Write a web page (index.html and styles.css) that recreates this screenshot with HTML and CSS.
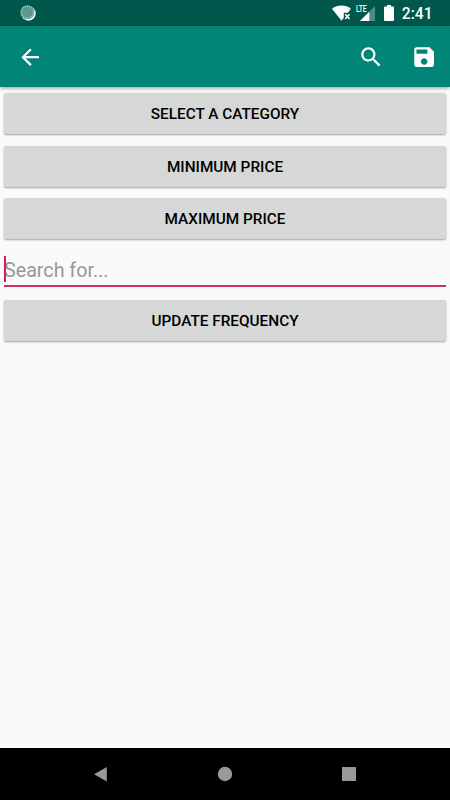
FILE: index.html
```html
<!DOCTYPE html>
<html lang="en">
<head>
<meta charset="utf-8">
<title>Search</title>
<link rel="stylesheet" href="styles.css">
</head>
<body>
<div class="screen">
  <div class="status">
    <svg class="sync" viewBox="0 0 16 16"><circle cx="8.4" cy="8.4" r="7.3" fill="#fff"/><circle cx="7.4" cy="7.3" r="7" fill="#5b978b"/><circle cx="7.4" cy="7.3" r="6" fill="none" stroke="#a5c9c2" stroke-width="1.4" stroke-dasharray="1 1.1"/></svg>
    <div class="tray">
      <svg class="wifi" viewBox="0 0 20 16"><path d="M0 3.8C5.5-.6 13.500-.6 19 3.800L15.800 7.800H11.800V12.800L9.500 15.700Z" fill="#fff"/><path d="M13.200 9.200l4.300 4.700M17.500 9.200l-4.300 4.700" stroke="#fff" stroke-width="1.500"/></svg>
      <div class="cell">
        <svg class="bars" viewBox="0 0 15 15"><path d="M15 0V15H0Z" fill="#4d8c80"/><path d="M9.300 5.700V15H0Z" fill="#fff"/></svg>
        <span class="lte">LTE</span>
      </div>
      <svg class="battery" viewBox="0 0 10 16"><path d="M3 0h4v1.500h2q1 0 1 1V15q0 1-1 1H1q-1 0-1-1V2.500q0-1 1-1h2z" fill="#fff"/></svg>
      <span class="clock">2:41</span>
    </div>
  </div>
  <header class="bar">
    <svg class="icon back" viewBox="0 0 24 24"><path d="M20 11H7.830l5.590-5.590L12 4l-8 8 8 8 1.410-1.410L7.830 13H20v-2z"/></svg>
    <svg class="icon find" viewBox="0 0 24 24"><path d="M15.500 14h-.79l-.28-.27C15.410 12.590 16 11.110 16 9.500 16 5.910 13.090 3 9.500 3S3 5.910 3 9.500 5.910 16 9.500 16c1.610 0 3.090-.59 4.230-1.570l.27.28v.79l5 4.990L20.490 19l-4.990-5zm-6 0C7.010 14 5 11.990 5 9.500S7.010 5 9.500 5 14 7.010 14 9.500 11.990 14 9.500 14z"/></svg>
    <svg class="icon" viewBox="0 0 24 24"><path d="M17 3H5c-1.110 0-2 .9-2 2v14c0 1.100.89 2 2 2h14c1.100 0 2-.9 2-2V7l-4-4zm-5 16c-1.660 0-3-1.340-3-3s1.340-3 3-3 3 1.340 3 3-1.340 3-3 3zm3-10H5V5h10v4z"/></svg>
  </header>
  <main class="form">
    <button class="btn">SELECT A CATEGORY</button>
    <button class="btn">MINIMUM PRICE</button>
    <button class="btn">MAXIMUM PRICE</button>
    <div class="field"><span class="caret"></span><span class="hint">Search for...</span></div>
    <button class="btn">UPDATE FREQUENCY</button>
  </main>
  <nav class="nav">
    <svg viewBox="0 0 14 15"><path d="M0 7.300L12.800 0V14.600Z"/></svg>
    <svg viewBox="0 0 14 15"><circle cx="7" cy="7" r="7.200"/></svg>
    <svg viewBox="0 0 14 15"><rect x="0" y="0" width="14" height="14" rx=".5"/></svg>
  </nav>
</div>
</body>
</html>
```

FILE: styles.css
```css
* { box-sizing: border-box; }
body { margin: 0; font-family: Roboto, sans-serif; }
.screen { width: 450px; height: 800px; display: flex; flex-direction: column; background: #fafafa; overflow: hidden; }
.status { height: 26px; flex: none; background: #00574b; display: flex; justify-content: space-between; align-items: center; padding: 0 17.5px 0 20px; }
.sync { width: 16px; height: 16px; }
.tray { display: flex; align-items: center; }
.wifi { width: 20px; height: 16px; margin-right: 4px; }
.cell { position: relative; width: 19px; height: 15px; display: flex; justify-content: flex-end; margin-right: 9px; }
.bars { width: 15px; height: 15px; }
.lte { position: absolute; left: 0; top: -2px; font-size: 9.5px; line-height: 9px; font-weight: 500; color: #fff; transform: scaleX(.7); transform-origin: left; }
.battery { width: 10px; height: 16px; margin-right: 8px; }
.clock { color: #fff; font-size: 15.6px; font-weight: 500; line-height: 26px; padding-top: 2px; }
.bar { height: 61px; flex: none; background: #008577; display: flex; align-items: center; padding: 1px 13px 0 17.4px; box-shadow: 0 1px 4px rgba(0,0,0,.4); position: relative; }
.icon { width: 26.25px; height: 26.25px; fill: #fff; }
.back { margin-right: auto; }
.find { margin-right: 26.8px; }
.form { flex: 1; padding: 6px 4px 0; display: flex; flex-direction: column; }
.btn { height: 41px; flex: none; margin: 0 0 11.5px; padding: 1px 0 0; border: 0; border-radius: 2px; background: #d6d8d7; color: #000; font: 500 15.35px/41px Roboto, sans-serif; text-align: center; box-shadow: 0 1px 2px rgba(0,0,0,.36); }
.field { height: 36px; flex: none; margin: 0 0 13.5px; position: relative; border-bottom: 2px solid #d0305f; padding-top: 7.5px; }
.caret { position: absolute; left: 0; top: 5px; width: 2px; height: 26px; background: #d81b60; }
.hint { display: block; font-size: 19.7px; line-height: 26px; color: #979797; }
.nav { height: 52px; flex: none; background: #000; display: flex; justify-content: space-between; align-items: center; padding: 0 94px 0 93.5px; }
.nav svg { width: 14px; height: 15px; fill: #999; overflow: visible; }
```
